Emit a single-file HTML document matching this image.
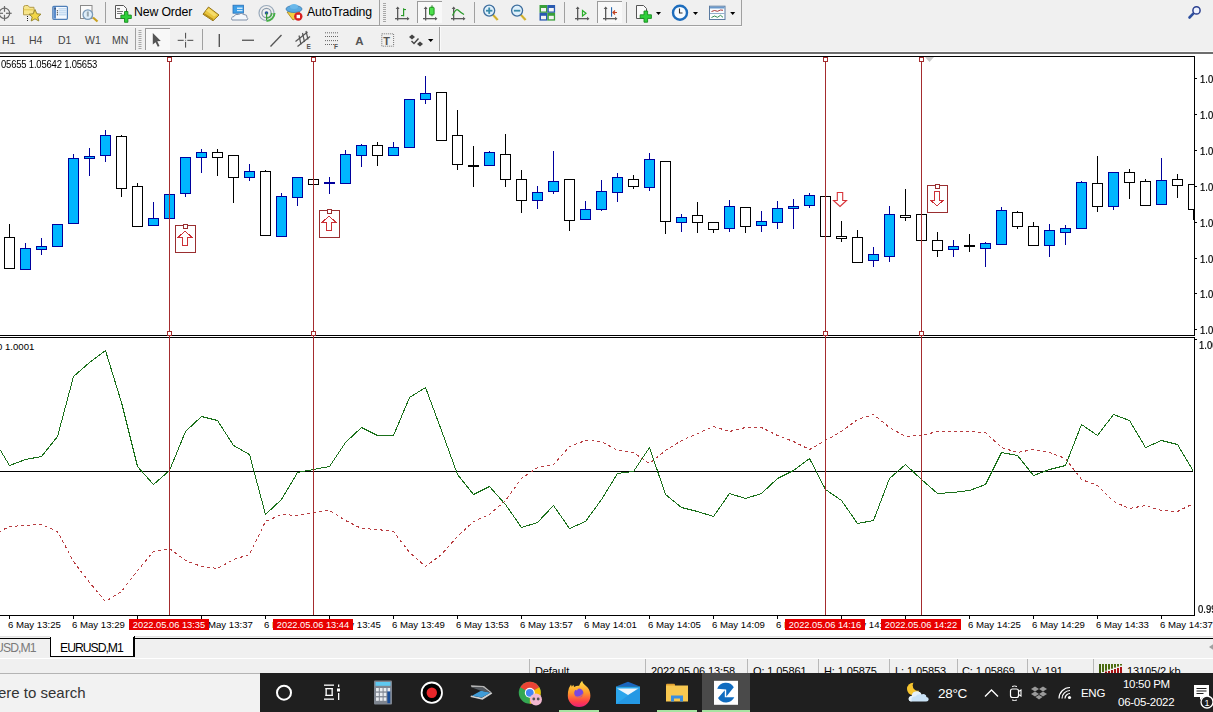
<!DOCTYPE html>
<html><head><meta charset="utf-8">
<style>
*{margin:0;padding:0;box-sizing:border-box}
html,body{width:1213px;height:712px;overflow:hidden;background:#f0f0f0;font-family:"Liberation Sans",sans-serif;position:relative}
.abs{position:absolute}
.tl{position:absolute;top:619px;font-size:9.6px;line-height:12px;color:#000;white-space:nowrap}
.rl{position:absolute;top:619px;width:80px;height:11px;background:#e80000;color:#fff;font-size:9.3px;line-height:12px;text-align:center;white-space:nowrap}
.pl{position:absolute;left:1200px;font-size:10.4px;line-height:12px;color:#000;white-space:nowrap;transform:scaleX(0.91);transform-origin:0 0;-webkit-text-stroke:0.2px #000}
.tb{position:absolute;font-size:12px;color:#000;white-space:nowrap}
.sep{position:absolute;top:659px;width:1px;height:14px;background:#b8b8b8}
.st{position:absolute;top:664px;font-size:11px;letter-spacing:-0.1px;line-height:14px;color:#000;white-space:nowrap}
.tk{position:absolute;color:#fff;line-height:15px;white-space:nowrap}
.tf{position:absolute;top:34px;font-size:10.5px;line-height:12px;color:#444;white-space:nowrap}
</style></head><body>
<!-- toolbar rows -->
<div class="abs" style="left:0;top:0;width:742px;height:26px;border-right:1px solid #a0a0a0;border-bottom:1px solid #a0a0a0"></div>
<div class="abs" style="left:0;top:26px;width:742px;height:1px;background:#fafafa"></div>
<div class="abs" style="left:0;top:51px;width:1213px;height:1px;background:#fafafa"></div>
<div class="abs" style="left:0;top:52px;width:1213px;height:2px;background:#6e6e6e"></div>
<svg class="abs" style="left:0;top:0" width="1213" height="54"><g stroke="#6a6a6a" fill="none" stroke-width="1.2"><circle cx="4.5" cy="13.3" r="5.2"/><line x1="4.5" y1="6" x2="4.5" y2="11.8"/><line x1="4.5" y1="14.8" x2="4.5" y2="20.8"/><line x1="-2" y1="13.3" x2="3" y2="13.3"/><line x1="6" y1="13.3" x2="11.7" y2="13.3"/></g><path d="M23.5 7.5 q0-2 2-2 h2.5 l1.5 1.8 h4.5 v7.5 h-10.5 z" fill="#f7e58a" stroke="#b39c4d" stroke-width="1"/><rect x="23.8" y="9" width="10" height="1.4" fill="#e8d060"/><g fill="#222"><rect x="27" y="16" width="1" height="1"/><rect x="27" y="18" width="1" height="1"/><rect x="27" y="20" width="1" height="1"/></g><polygon points="35,9.5 36.8,13.8 41,14.2 37.8,17 38.8,21 35,18.8 31.2,21 32.2,17 29,14.2 33.2,13.8" fill="#f2d646" stroke="#9a8a30" stroke-width="1"/><rect x="52.8" y="6.3" width="14.6" height="13" rx="1" fill="#f4f9ff" stroke="#4f7fb8" stroke-width="1.2"/><rect x="53.4" y="7" width="2.6" height="11.6" fill="#5a8ccc"/><g fill="#333"><rect x="54.5" y="8.2" width="1.2" height="1.2"/><rect x="56.8" y="10.2" width="1.1" height="1.1"/><rect x="56.8" y="12.2" width="1.1" height="1.1"/><rect x="56.8" y="14.2" width="1.1" height="1.1"/></g><g fill="#a8c8e8"><rect x="58.5" y="8.4" width="8" height="0.9"/><rect x="58.5" y="10.4" width="8" height="0.9"/><rect x="58.5" y="12.4" width="8" height="0.9"/><rect x="58.5" y="14.4" width="8" height="0.9"/></g><rect x="80.5" y="5.5" width="11.5" height="13" fill="#fbfbfb" stroke="#8a8a8a" stroke-width="1"/><line x1="93" y1="17.5" x2="97.5" y2="21.5" stroke="#c8a020" stroke-width="2.2"/><circle cx="87.8" cy="14.6" r="4.8" fill="#dfeefa" stroke="#7a9ab8" stroke-width="1.3"/><rect x="86.8" y="11.5" width="2" height="5" fill="#9aa8b0"/><rect x="105" y="2" width="1" height="21" fill="#a0a0a0"/><path d="M115.5 5.5 h8 l3 3 v10 h-11 z" fill="#fafafa" stroke="#555" stroke-width="1"/><g fill="#777"><rect x="117" y="8" width="3" height="1.5"/><rect x="117" y="11" width="6" height="1"/><rect x="117" y="13" width="5" height="1"/></g><path d="M124.5 11.5 h3.4 v3.6 h3.4 v3.4 h-3.4 v3.8 h-3.4 v-3.8 h-3.6 v-3.4 h3.6 z" fill="#2fcf3a" stroke="#178a1f" stroke-width="0.9"/><polygon points="208.5,7 219,15 213,20.8 203,14.2" fill="#e9c53c" stroke="#8b6b12" stroke-width="0.9"/><polygon points="203.5,14.5 213,20.5 213.5,19 204.5,13.2" fill="#b8901a"/><polygon points="209,8.5 217,14.8 214,16.5 206,10.5" fill="#f6dc6a"/><rect x="233" y="5.2" width="10.5" height="8" fill="#3d9ee6" stroke="#2a70b8" stroke-width="0.8"/><rect x="237" y="7.5" width="5.5" height="1.5" fill="#cfe8fb"/><rect x="237" y="10" width="5.5" height="1.2" fill="#cfe8fb"/><path d="M232 20 q-1.5-3 2-3.5 q1-3 4.5-2 q2.5-2.5 5.5 0 q3.5 0 3 3 q1.5 0.8 0 2.5 z" fill="#f4f7fb" stroke="#8090a8" stroke-width="1"/><g fill="none" stroke-width="1.2"><circle cx="266.5" cy="13" r="7.5" stroke="#9aaabb"/><circle cx="266.5" cy="13" r="4.6" stroke="#8a9aaa"/></g><path d="M266.5 21 a8 8 0 0 0 8 -8" fill="none" stroke="#48b048" stroke-width="2"/><path d="M267 18 a5 5 0 0 0 4.8 -5" fill="none" stroke="#48a848" stroke-width="1.6"/><circle cx="266.5" cy="13" r="1.8" fill="#2a5a9a"/><rect x="266" y="13" width="1.2" height="7" fill="#3a9a3a"/><path d="M287 12 l6 8 l7 -4 l-1 -6 z" fill="#f4d040" stroke="#a08020" stroke-width="0.8"/><ellipse cx="294" cy="9" rx="8" ry="3.5" fill="#5aaae0" stroke="#3a78b0" stroke-width="0.8"/><ellipse cx="294" cy="6.5" rx="4" ry="2.5" fill="#6ab8ea"/><circle cx="298.3" cy="16.5" r="4.2" fill="#d82020"/><rect x="296.6" y="14.8" width="3.4" height="3.4" fill="#fff"/><rect x="379" y="0" width="1" height="25" fill="#a0a0a0"/><rect x="383" y="3" width="3" height="1" fill="#a8a8a8"/><rect x="383" y="5" width="3" height="1" fill="#a8a8a8"/><rect x="383" y="7" width="3" height="1" fill="#a8a8a8"/><rect x="383" y="9" width="3" height="1" fill="#a8a8a8"/><rect x="383" y="11" width="3" height="1" fill="#a8a8a8"/><rect x="383" y="13" width="3" height="1" fill="#a8a8a8"/><rect x="383" y="15" width="3" height="1" fill="#a8a8a8"/><rect x="383" y="17" width="3" height="1" fill="#a8a8a8"/><rect x="383" y="19" width="3" height="1" fill="#a8a8a8"/><rect x="383" y="21" width="3" height="1" fill="#a8a8a8"/><g fill="#5a5a5a"><rect x="397" y="7.5" width="1.3" height="13"/><rect x="395" y="18" width="13.5" height="1.3"/><polygon points="397.65,6.5 395.7,9 399.6,9"/><polygon points="409.5,18.65 407,16.7 407,20.6"/></g><g fill="#2a9a2a"><rect x="403" y="8.3" width="1.2" height="8"/><rect x="404" y="9" width="2" height="1.1"/><rect x="401" y="15" width="2" height="1.1"/></g><rect x="417" y="1" width="25" height="22" fill="#f8f8f8"/><rect x="417" y="1" width="25" height="1" fill="#9a9a9a"/><rect x="417" y="1" width="1" height="22" fill="#9a9a9a"/><g fill="#5a5a5a"><rect x="425" y="7.5" width="1.3" height="13"/><rect x="423" y="18" width="13.5" height="1.3"/><polygon points="425.65,6.5 423.7,9 427.6,9"/><polygon points="437.5,18.65 435,16.7 435,20.6"/></g><rect x="431.5" y="5.3" width="1" height="11" fill="#1a7a1a"/><rect x="429.5" y="7.3" width="4.6" height="7.5" rx="0.8" fill="#4ce04c" stroke="#1a8a1a" stroke-width="0.9"/><g fill="#5a5a5a"><rect x="453" y="7.5" width="1.3" height="13"/><rect x="451" y="18" width="13.5" height="1.3"/><polygon points="453.65,6.5 451.7,9 455.6,9"/><polygon points="465.5,18.65 463,16.7 463,20.6"/></g><path d="M452.5 15.5 Q456 8 458 10 T464 14.5" fill="none" stroke="#2a9a2a" stroke-width="1.2"/><rect x="474" y="2" width="1" height="21" fill="#a0a0a0"/><line x1="492.7" y1="14.5" x2="497.7" y2="20" stroke="#e0c040" stroke-width="2.6"/><line x1="492.7" y1="14.5" x2="497.7" y2="20" stroke="#b09020" stroke-width="0.6"/><circle cx="489.2" cy="10.6" r="5.5" fill="#dff0fb" stroke="#3d6d9d" stroke-width="1.3"/><rect x="486.0" y="9.8" width="6.4" height="1.8" fill="#3a8aaa"/><rect x="488.3" y="7.5" width="1.8" height="6.4" fill="#3a8aaa"/><line x1="520.6" y1="14.5" x2="525.6" y2="20" stroke="#e0c040" stroke-width="2.6"/><line x1="520.6" y1="14.5" x2="525.6" y2="20" stroke="#b09020" stroke-width="0.6"/><circle cx="517.1" cy="10.6" r="5.5" fill="#dff0fb" stroke="#3d6d9d" stroke-width="1.3"/><rect x="513.9" y="9.8" width="6.4" height="1.8" fill="#3a8aaa"/><rect x="539.5" y="5" width="7.8" height="7.8" fill="#3aa03a"/><rect x="547.3" y="5" width="7.8" height="7.8" fill="#2a5ab0"/><rect x="539.5" y="12.8" width="7.8" height="7.8" fill="#2a5ab0"/><rect x="547.3" y="12.8" width="7.8" height="7.8" fill="#3aa03a"/><g fill="#f4f4f4"><rect x="541" y="8" width="5" height="3.5"/><rect x="548.8" y="8" width="5" height="3.5"/><rect x="541" y="15.8" width="5" height="3.5"/><rect x="548.8" y="15.8" width="5" height="3.5"/></g><rect x="564" y="2" width="1" height="21" fill="#a0a0a0"/><g fill="#5a5a5a"><rect x="577" y="7.5" width="1.3" height="13"/><rect x="575" y="18" width="13.5" height="1.3"/><polygon points="577.65,6.5 575.7,9 579.6,9"/><polygon points="589.5,18.65 587,16.7 587,20.6"/></g><polygon points="582.5,10.5 586,13.2 582.5,16" fill="none" stroke="#2ab02a" stroke-width="1.2"/><rect x="597" y="1" width="25" height="22" fill="#f8f8f8"/><rect x="597" y="1" width="25" height="1" fill="#9a9a9a"/><rect x="597" y="1" width="1" height="22" fill="#9a9a9a"/><g fill="#5a5a5a"><rect x="605" y="7.5" width="1.3" height="13"/><rect x="603" y="18" width="13.5" height="1.3"/><polygon points="605.65,6.5 603.7,9 607.6,9"/><polygon points="617.5,18.65 615,16.7 615,20.6"/></g><rect x="611" y="7.2" width="1.1" height="9.5" fill="#2a6ab0"/><path d="M617 12.5 h-4 M615 10.5 l-2 2 l2 2" fill="none" stroke="#c04020" stroke-width="1.2"/><rect x="626" y="2" width="1" height="21" fill="#a0a0a0"/><path d="M636.5 5.5 h7 l3 3 v10 h-10 z" fill="#fafafa" stroke="#555" stroke-width="1"/><path d="M644 11 h3.6 v3.8 h3.8 v3.6 h-3.8 v3.8 h-3.6 v-3.8 h-3.8 v-3.6 h3.8 z" fill="#2fcf3a" stroke="#178a1f" stroke-width="0.9"/><polygon points="656,12 661,12 658.5,15" fill="#000"/><circle cx="680" cy="12.7" r="7" fill="#f6fbff" stroke="#1d6dbd" stroke-width="2.4"/><path d="M679.5 8.5 v4.5 h3" fill="none" stroke="#333" stroke-width="1.1"/><polygon points="693,12 698,12 695.5,15" fill="#000"/><rect x="709.5" y="6.2" width="15.5" height="13.3" fill="#fbfdff" stroke="#5a7aa0" stroke-width="1"/><rect x="710" y="6.7" width="14.5" height="1.8" fill="#6a9acc"/><rect x="710" y="13" width="14.5" height="0.8" fill="#7a9ac0"/><path d="M711.5 11.5 l3 -1 l3 0.8 l3 -1.3 l2.5 0.3" fill="none" stroke="#a02020" stroke-width="0.9"/><path d="M711.5 17.5 l3 -1.5 l3 1.3 l3 -2 l2.5 2" fill="none" stroke="#208040" stroke-width="0.9"/><polygon points="730.2,12 735.2,12 732.7,15" fill="#000"/><line x1="1189.5" y1="17.5" x2="1193" y2="13.8" stroke="#2d4f9f" stroke-width="2.6" stroke-linecap="round"/><circle cx="1196.5" cy="10.4" r="3.6" fill="#eef3ff" stroke="#2a3f8f" stroke-width="1.5"/><rect x="135" y="28" width="1" height="22" fill="#a0a0a0"/><rect x="138.5" y="30" width="3" height="1" fill="#a8a8a8"/><rect x="138.5" y="32" width="3" height="1" fill="#a8a8a8"/><rect x="138.5" y="34" width="3" height="1" fill="#a8a8a8"/><rect x="138.5" y="36" width="3" height="1" fill="#a8a8a8"/><rect x="138.5" y="38" width="3" height="1" fill="#a8a8a8"/><rect x="138.5" y="40" width="3" height="1" fill="#a8a8a8"/><rect x="138.5" y="42" width="3" height="1" fill="#a8a8a8"/><rect x="138.5" y="44" width="3" height="1" fill="#a8a8a8"/><rect x="138.5" y="46" width="3" height="1" fill="#a8a8a8"/><rect x="138.5" y="48" width="3" height="1" fill="#a8a8a8"/><rect x="145" y="28" width="25" height="22" fill="#f8f8f8"/><rect x="145" y="28" width="25" height="1" fill="#9a9a9a"/><rect x="145" y="28" width="1" height="22" fill="#9a9a9a"/><polygon points="152.8,33 160.8,41 157.3,41.3 159.5,46 157.8,46.8 155.6,42.2 152.8,44.5" fill="#555"/><g fill="#555"><rect x="185" y="32.8" width="1.1" height="5.7"/><rect x="185" y="41.8" width="1.1" height="5.8"/><rect x="177.7" y="39.8" width="6" height="1.1"/><rect x="187.3" y="39.8" width="6" height="1.1"/><rect x="185" y="39.8" width="1.1" height="1.1" fill="#888"/></g><rect x="202" y="29" width="1" height="21" fill="#a0a0a0"/><rect x="218.6" y="34" width="1.4" height="13" fill="#555"/><rect x="242" y="39.6" width="12" height="1.3" fill="#555"/><line x1="270.5" y1="46.5" x2="281.5" y2="35" stroke="#555" stroke-width="1.3"/><g stroke="#555" stroke-width="1.2" fill="none"><line x1="295.5" y1="41.5" x2="307.5" y2="32"/><line x1="297.5" y1="46.5" x2="310" y2="36.5"/><line x1="299" y1="35.5" x2="301" y2="44.5"/><line x1="302.5" y1="33" x2="304.5" y2="42"/><line x1="306" y1="31" x2="308" y2="39.5"/></g><text x="306.5" y="49" font-family="Liberation Sans" font-weight="bold" font-size="6.5" fill="#555">E</text><g fill="#666"><rect x="325" y="32.3" width="1" height="1"/><rect x="327" y="32.3" width="1" height="1"/><rect x="329" y="32.3" width="1" height="1"/><rect x="331" y="32.3" width="1" height="1"/><rect x="333" y="32.3" width="1" height="1"/><rect x="335" y="32.3" width="1" height="1"/><rect x="337" y="32.3" width="1" height="1"/><rect x="325" y="36.0" width="1" height="1"/><rect x="327" y="36.0" width="1" height="1"/><rect x="329" y="36.0" width="1" height="1"/><rect x="331" y="36.0" width="1" height="1"/><rect x="333" y="36.0" width="1" height="1"/><rect x="335" y="36.0" width="1" height="1"/><rect x="337" y="36.0" width="1" height="1"/><rect x="325" y="40.1" width="1" height="1"/><rect x="327" y="40.1" width="1" height="1"/><rect x="329" y="40.1" width="1" height="1"/><rect x="331" y="40.1" width="1" height="1"/><rect x="333" y="40.1" width="1" height="1"/><rect x="335" y="40.1" width="1" height="1"/><rect x="337" y="40.1" width="1" height="1"/><rect x="325" y="44.0" width="1" height="1"/><rect x="327" y="44.0" width="1" height="1"/><rect x="329" y="44.0" width="1" height="1"/><rect x="331" y="44.0" width="1" height="1"/><rect x="333" y="44.0" width="1" height="1"/></g><text x="334" y="49" font-family="Liberation Sans" font-weight="bold" font-size="6.5" fill="#555">F</text><text x="355.3" y="44.6" font-family="Liberation Sans" font-weight="bold" font-size="11.5" fill="#555">A</text><rect x="381.8" y="33.8" width="11.8" height="12.4" fill="none" stroke="#777" stroke-width="1" stroke-dasharray="1 1"/><text x="383.3" y="44.5" font-family="Liberation Sans" font-weight="bold" font-size="11" fill="#555">T</text><polygon points="412,34.5 415,37 412,39.5 409,37" fill="#444"/><polygon points="420,41.5 423,44 420,46.5 417,44" fill="#444"/><path d="M411.5 41 l2.5 2.5 l4.5 -5" fill="none" stroke="#444" stroke-width="1.4"/><polygon points="428,39 433.4,39 430.7,42" fill="#000"/><rect x="439" y="27" width="1" height="24" fill="#a0a0a0"/><rect x="440" y="27" width="1" height="24" fill="#fafafa"/></svg>
<div class="tb" style="left:134px;top:5px;font-size:12.3px;line-height:14px;letter-spacing:-0.15px">New Order</div>
<div class="tb" style="left:307px;top:5px;font-size:12.3px;line-height:14px;letter-spacing:-0.15px">AutoTrading</div>
<div class="tf" style="left:2px">H1</div><div class="tf" style="left:29px">H4</div><div class="tf" style="left:58px">D1</div><div class="tf" style="left:85px">W1</div><div class="tf" style="left:112px">MN</div>
<svg class="abs" style="left:0;top:0" width="1213" height="712">
<defs><clipPath id="mainclip"><rect x="0" y="57" width="1194" height="278"/></clipPath>
<clipPath id="indclip"><rect x="0" y="338" width="1194" height="277"/></clipPath></defs>
<rect x="0" y="54" width="1213" height="583" fill="#ffffff"/><g shape-rendering="crispEdges" clip-path="url(#mainclip)"><rect x="9" y="224" width="1" height="13" fill="#000000"/><rect x="4" y="237" width="11" height="32" fill="#000000"/><rect x="5" y="238" width="9" height="30" fill="#ffffff"/><rect x="25" y="243" width="1" height="5" fill="#00009c"/><rect x="20" y="248" width="11" height="22" fill="#00009c"/><rect x="21" y="249" width="9" height="20" fill="#00b6ff"/><rect x="41" y="238" width="1" height="8" fill="#00009c"/><rect x="41" y="250" width="1" height="5" fill="#00009c"/><rect x="36" y="246" width="11" height="4" fill="#00009c"/><rect x="37" y="247" width="9" height="2" fill="#00b6ff"/><rect x="52" y="224" width="11" height="23" fill="#00009c"/><rect x="53" y="225" width="9" height="21" fill="#00b6ff"/><rect x="73" y="154" width="1" height="4" fill="#00009c"/><rect x="68" y="158" width="11" height="66" fill="#00009c"/><rect x="69" y="159" width="9" height="64" fill="#00b6ff"/><rect x="89" y="148" width="1" height="8" fill="#00009c"/><rect x="89" y="159" width="1" height="17" fill="#00009c"/><rect x="84" y="156" width="11" height="3" fill="#00009c"/><rect x="85" y="157" width="9" height="1" fill="#00b6ff"/><rect x="105" y="130" width="1" height="5" fill="#00009c"/><rect x="105" y="156" width="1" height="6" fill="#00009c"/><rect x="100" y="135" width="11" height="21" fill="#00009c"/><rect x="101" y="136" width="9" height="19" fill="#00b6ff"/><rect x="121" y="135" width="1" height="1" fill="#000000"/><rect x="121" y="189" width="1" height="8" fill="#000000"/><rect x="116" y="136" width="11" height="53" fill="#000000"/><rect x="117" y="137" width="9" height="51" fill="#ffffff"/><rect x="137" y="183" width="1" height="3" fill="#000000"/><rect x="137" y="227" width="1" height="0" fill="#000000"/><rect x="132" y="186" width="11" height="41" fill="#000000"/><rect x="133" y="187" width="9" height="39" fill="#ffffff"/><rect x="153" y="202" width="1" height="16" fill="#00009c"/><rect x="148" y="218" width="11" height="8" fill="#00009c"/><rect x="149" y="219" width="9" height="6" fill="#00b6ff"/><rect x="164" y="194" width="11" height="25" fill="#00009c"/><rect x="165" y="195" width="9" height="23" fill="#00b6ff"/><rect x="185" y="194" width="1" height="3" fill="#00009c"/><rect x="180" y="157" width="11" height="37" fill="#00009c"/><rect x="181" y="158" width="9" height="35" fill="#00b6ff"/><rect x="201" y="149" width="1" height="3" fill="#00009c"/><rect x="201" y="158" width="1" height="15" fill="#00009c"/><rect x="196" y="152" width="11" height="6" fill="#00009c"/><rect x="197" y="153" width="9" height="4" fill="#00b6ff"/><rect x="217" y="149" width="1" height="3" fill="#000000"/><rect x="217" y="158" width="1" height="18" fill="#000000"/><rect x="212" y="152" width="11" height="6" fill="#000000"/><rect x="213" y="153" width="9" height="4" fill="#ffffff"/><rect x="233" y="178" width="1" height="25" fill="#000000"/><rect x="228" y="155" width="11" height="23" fill="#000000"/><rect x="229" y="156" width="9" height="21" fill="#ffffff"/><rect x="249" y="164" width="1" height="7" fill="#00009c"/><rect x="249" y="178" width="1" height="3" fill="#00009c"/><rect x="244" y="171" width="11" height="7" fill="#00009c"/><rect x="245" y="172" width="9" height="5" fill="#00b6ff"/><rect x="265" y="170" width="1" height="1" fill="#000000"/><rect x="260" y="171" width="11" height="65" fill="#000000"/><rect x="261" y="172" width="9" height="63" fill="#ffffff"/><rect x="281" y="193" width="1" height="3" fill="#00009c"/><rect x="276" y="196" width="11" height="41" fill="#00009c"/><rect x="277" y="197" width="9" height="39" fill="#00b6ff"/><rect x="297" y="198" width="1" height="8" fill="#00009c"/><rect x="292" y="177" width="11" height="21" fill="#00009c"/><rect x="293" y="178" width="9" height="19" fill="#00b6ff"/><rect x="308" y="179" width="11" height="6" fill="#000000"/><rect x="309" y="180" width="9" height="4" fill="#ffffff"/><rect x="329" y="177" width="1" height="5" fill="#00009c"/><rect x="329" y="184" width="1" height="10" fill="#00009c"/><rect x="324" y="182" width="11" height="2" fill="#00009c"/><rect x="345" y="150" width="1" height="4" fill="#00009c"/><rect x="340" y="154" width="11" height="30" fill="#00009c"/><rect x="341" y="155" width="9" height="28" fill="#00b6ff"/><rect x="361" y="144" width="1" height="1" fill="#00009c"/><rect x="361" y="156" width="1" height="11" fill="#00009c"/><rect x="356" y="145" width="11" height="11" fill="#00009c"/><rect x="357" y="146" width="9" height="9" fill="#00b6ff"/><rect x="377" y="142" width="1" height="3" fill="#000000"/><rect x="377" y="156" width="1" height="10" fill="#000000"/><rect x="372" y="145" width="11" height="11" fill="#000000"/><rect x="373" y="146" width="9" height="9" fill="#ffffff"/><rect x="393" y="142" width="1" height="5" fill="#00009c"/><rect x="388" y="147" width="11" height="9" fill="#00009c"/><rect x="389" y="148" width="9" height="7" fill="#00b6ff"/><rect x="404" y="99" width="11" height="49" fill="#00009c"/><rect x="405" y="100" width="9" height="47" fill="#00b6ff"/><rect x="425" y="76" width="1" height="17" fill="#00009c"/><rect x="425" y="100" width="1" height="4" fill="#00009c"/><rect x="420" y="93" width="11" height="7" fill="#00009c"/><rect x="421" y="94" width="9" height="5" fill="#00b6ff"/><rect x="436" y="92" width="11" height="49" fill="#000000"/><rect x="437" y="93" width="9" height="47" fill="#ffffff"/><rect x="457" y="110" width="1" height="25" fill="#000000"/><rect x="457" y="165" width="1" height="5" fill="#000000"/><rect x="452" y="135" width="11" height="30" fill="#000000"/><rect x="453" y="136" width="9" height="28" fill="#ffffff"/><rect x="473" y="146" width="1" height="19" fill="#000000"/><rect x="473" y="167" width="1" height="20" fill="#000000"/><rect x="468" y="165" width="11" height="2" fill="#000000"/><rect x="489" y="151" width="1" height="1" fill="#00009c"/><rect x="484" y="152" width="11" height="14" fill="#00009c"/><rect x="485" y="153" width="9" height="12" fill="#00b6ff"/><rect x="505" y="134" width="1" height="20" fill="#000000"/><rect x="505" y="180" width="1" height="7" fill="#000000"/><rect x="500" y="154" width="11" height="26" fill="#000000"/><rect x="501" y="155" width="9" height="24" fill="#ffffff"/><rect x="521" y="170" width="1" height="9" fill="#000000"/><rect x="521" y="201" width="1" height="12" fill="#000000"/><rect x="516" y="179" width="11" height="22" fill="#000000"/><rect x="517" y="180" width="9" height="20" fill="#ffffff"/><rect x="537" y="186" width="1" height="6" fill="#00009c"/><rect x="537" y="201" width="1" height="8" fill="#00009c"/><rect x="532" y="192" width="11" height="9" fill="#00009c"/><rect x="533" y="193" width="9" height="7" fill="#00b6ff"/><rect x="553" y="151" width="1" height="30" fill="#00009c"/><rect x="553" y="192" width="1" height="2" fill="#00009c"/><rect x="548" y="181" width="11" height="11" fill="#00009c"/><rect x="549" y="182" width="9" height="9" fill="#00b6ff"/><rect x="569" y="221" width="1" height="10" fill="#000000"/><rect x="564" y="179" width="11" height="42" fill="#000000"/><rect x="565" y="180" width="9" height="40" fill="#ffffff"/><rect x="585" y="201" width="1" height="8" fill="#00009c"/><rect x="580" y="209" width="11" height="11" fill="#00009c"/><rect x="581" y="210" width="9" height="9" fill="#00b6ff"/><rect x="601" y="180" width="1" height="11" fill="#00009c"/><rect x="601" y="210" width="1" height="1" fill="#00009c"/><rect x="596" y="191" width="11" height="19" fill="#00009c"/><rect x="597" y="192" width="9" height="17" fill="#00b6ff"/><rect x="617" y="173" width="1" height="4" fill="#00009c"/><rect x="617" y="193" width="1" height="9" fill="#00009c"/><rect x="612" y="177" width="11" height="16" fill="#00009c"/><rect x="613" y="178" width="9" height="14" fill="#00b6ff"/><rect x="633" y="175" width="1" height="4" fill="#000000"/><rect x="633" y="187" width="1" height="2" fill="#000000"/><rect x="628" y="179" width="11" height="8" fill="#000000"/><rect x="629" y="180" width="9" height="6" fill="#ffffff"/><rect x="649" y="153" width="1" height="6" fill="#00009c"/><rect x="649" y="188" width="1" height="3" fill="#00009c"/><rect x="644" y="159" width="11" height="29" fill="#00009c"/><rect x="645" y="160" width="9" height="27" fill="#00b6ff"/><rect x="665" y="222" width="1" height="12" fill="#000000"/><rect x="660" y="161" width="11" height="61" fill="#000000"/><rect x="661" y="162" width="9" height="59" fill="#ffffff"/><rect x="681" y="214" width="1" height="3" fill="#00009c"/><rect x="681" y="223" width="1" height="9" fill="#00009c"/><rect x="676" y="217" width="11" height="6" fill="#00009c"/><rect x="677" y="218" width="9" height="4" fill="#00b6ff"/><rect x="697" y="202" width="1" height="13" fill="#000000"/><rect x="697" y="223" width="1" height="10" fill="#000000"/><rect x="692" y="215" width="11" height="8" fill="#000000"/><rect x="693" y="216" width="9" height="6" fill="#ffffff"/><rect x="713" y="230" width="1" height="3" fill="#000000"/><rect x="708" y="222" width="11" height="8" fill="#000000"/><rect x="709" y="223" width="9" height="6" fill="#ffffff"/><rect x="729" y="200" width="1" height="6" fill="#00009c"/><rect x="729" y="229" width="1" height="3" fill="#00009c"/><rect x="724" y="206" width="11" height="23" fill="#00009c"/><rect x="725" y="207" width="9" height="21" fill="#00b6ff"/><rect x="745" y="227" width="1" height="6" fill="#000000"/><rect x="740" y="207" width="11" height="20" fill="#000000"/><rect x="741" y="208" width="9" height="18" fill="#ffffff"/><rect x="761" y="211" width="1" height="10" fill="#00009c"/><rect x="761" y="226" width="1" height="6" fill="#00009c"/><rect x="756" y="221" width="11" height="5" fill="#00009c"/><rect x="757" y="222" width="9" height="3" fill="#00b6ff"/><rect x="777" y="201" width="1" height="7" fill="#00009c"/><rect x="777" y="223" width="1" height="6" fill="#00009c"/><rect x="772" y="208" width="11" height="15" fill="#00009c"/><rect x="773" y="209" width="9" height="13" fill="#00b6ff"/><rect x="793" y="199" width="1" height="7" fill="#00009c"/><rect x="793" y="209" width="1" height="20" fill="#00009c"/><rect x="788" y="206" width="11" height="3" fill="#00009c"/><rect x="789" y="207" width="9" height="1" fill="#00b6ff"/><rect x="809" y="193" width="1" height="2" fill="#00009c"/><rect x="809" y="206" width="1" height="2" fill="#00009c"/><rect x="804" y="195" width="11" height="11" fill="#00009c"/><rect x="805" y="196" width="9" height="9" fill="#00b6ff"/><rect x="820" y="196" width="11" height="41" fill="#000000"/><rect x="821" y="197" width="9" height="39" fill="#ffffff"/><rect x="841" y="221" width="1" height="15" fill="#000000"/><rect x="841" y="239" width="1" height="3" fill="#000000"/><rect x="836" y="236" width="11" height="3" fill="#000000"/><rect x="837" y="237" width="9" height="1" fill="#ffffff"/><rect x="857" y="230" width="1" height="7" fill="#000000"/><rect x="852" y="237" width="11" height="26" fill="#000000"/><rect x="853" y="238" width="9" height="24" fill="#ffffff"/><rect x="873" y="247" width="1" height="7" fill="#00009c"/><rect x="873" y="261" width="1" height="6" fill="#00009c"/><rect x="868" y="254" width="11" height="7" fill="#00009c"/><rect x="869" y="255" width="9" height="5" fill="#00b6ff"/><rect x="889" y="206" width="1" height="8" fill="#00009c"/><rect x="889" y="257" width="1" height="5" fill="#00009c"/><rect x="884" y="214" width="11" height="43" fill="#00009c"/><rect x="885" y="215" width="9" height="41" fill="#00b6ff"/><rect x="905" y="189" width="1" height="26" fill="#000000"/><rect x="905" y="218" width="1" height="3" fill="#000000"/><rect x="900" y="215" width="11" height="3" fill="#000000"/><rect x="901" y="216" width="9" height="1" fill="#ffffff"/><rect x="916" y="214" width="11" height="27" fill="#000000"/><rect x="917" y="215" width="9" height="25" fill="#ffffff"/><rect x="937" y="232" width="1" height="8" fill="#000000"/><rect x="937" y="251" width="1" height="6" fill="#000000"/><rect x="932" y="240" width="11" height="11" fill="#000000"/><rect x="933" y="241" width="9" height="9" fill="#ffffff"/><rect x="953" y="240" width="1" height="6" fill="#00009c"/><rect x="953" y="250" width="1" height="7" fill="#00009c"/><rect x="948" y="246" width="11" height="4" fill="#00009c"/><rect x="949" y="247" width="9" height="2" fill="#00b6ff"/><rect x="969" y="234" width="1" height="11" fill="#000000"/><rect x="969" y="247" width="1" height="5" fill="#000000"/><rect x="964" y="245" width="11" height="2" fill="#000000"/><rect x="985" y="242" width="1" height="1" fill="#00009c"/><rect x="985" y="249" width="1" height="18" fill="#00009c"/><rect x="980" y="243" width="11" height="6" fill="#00009c"/><rect x="981" y="244" width="9" height="4" fill="#00b6ff"/><rect x="1001" y="207" width="1" height="3" fill="#00009c"/><rect x="996" y="210" width="11" height="35" fill="#00009c"/><rect x="997" y="211" width="9" height="33" fill="#00b6ff"/><rect x="1017" y="211" width="1" height="1" fill="#000000"/><rect x="1017" y="227" width="1" height="2" fill="#000000"/><rect x="1012" y="212" width="11" height="15" fill="#000000"/><rect x="1013" y="213" width="9" height="13" fill="#ffffff"/><rect x="1033" y="222" width="1" height="4" fill="#000000"/><rect x="1033" y="246" width="1" height="0" fill="#000000"/><rect x="1028" y="226" width="11" height="20" fill="#000000"/><rect x="1029" y="227" width="9" height="18" fill="#ffffff"/><rect x="1049" y="224" width="1" height="6" fill="#00009c"/><rect x="1049" y="246" width="1" height="11" fill="#00009c"/><rect x="1044" y="230" width="11" height="16" fill="#00009c"/><rect x="1045" y="231" width="9" height="14" fill="#00b6ff"/><rect x="1065" y="225" width="1" height="3" fill="#00009c"/><rect x="1065" y="233" width="1" height="12" fill="#00009c"/><rect x="1060" y="228" width="11" height="5" fill="#00009c"/><rect x="1061" y="229" width="9" height="3" fill="#00b6ff"/><rect x="1081" y="181" width="1" height="1" fill="#00009c"/><rect x="1076" y="182" width="11" height="47" fill="#00009c"/><rect x="1077" y="183" width="9" height="45" fill="#00b6ff"/><rect x="1097" y="156" width="1" height="27" fill="#000000"/><rect x="1097" y="207" width="1" height="5" fill="#000000"/><rect x="1092" y="183" width="11" height="24" fill="#000000"/><rect x="1093" y="184" width="9" height="22" fill="#ffffff"/><rect x="1113" y="207" width="1" height="3" fill="#00009c"/><rect x="1108" y="172" width="11" height="35" fill="#00009c"/><rect x="1109" y="173" width="9" height="33" fill="#00b6ff"/><rect x="1129" y="169" width="1" height="3" fill="#000000"/><rect x="1129" y="183" width="1" height="16" fill="#000000"/><rect x="1124" y="172" width="11" height="11" fill="#000000"/><rect x="1125" y="173" width="9" height="9" fill="#ffffff"/><rect x="1145" y="179" width="1" height="2" fill="#000000"/><rect x="1140" y="181" width="11" height="25" fill="#000000"/><rect x="1141" y="182" width="9" height="23" fill="#ffffff"/><rect x="1161" y="158" width="1" height="22" fill="#00009c"/><rect x="1156" y="180" width="11" height="25" fill="#00009c"/><rect x="1157" y="181" width="9" height="23" fill="#00b6ff"/><rect x="1177" y="174" width="1" height="5" fill="#000000"/><rect x="1177" y="186" width="1" height="12" fill="#000000"/><rect x="1172" y="179" width="11" height="7" fill="#000000"/><rect x="1173" y="180" width="9" height="5" fill="#ffffff"/><rect x="1193" y="210" width="1" height="10" fill="#000000"/><rect x="1188" y="184" width="11" height="26" fill="#000000"/><rect x="1189" y="185" width="9" height="24" fill="#ffffff"/></g><g shape-rendering="crispEdges" fill="#000"><rect x="0" y="56" width="1195" height="1"/><rect x="1194" y="56" width="1" height="280"/><rect x="0" y="335" width="1195" height="1"/><rect x="0" y="337" width="1195" height="1"/><rect x="1194" y="337" width="1" height="279"/><rect x="0" y="615" width="1195" height="1"/><rect x="0" y="471" width="1193" height="1"/><rect x="1195" y="78" width="2" height="1"/><rect x="1195" y="114" width="2" height="1"/><rect x="1195" y="150" width="2" height="1"/><rect x="1195" y="186" width="2" height="1"/><rect x="1195" y="222" width="2" height="1"/><rect x="1195" y="258" width="2" height="1"/><rect x="1195" y="293" width="2" height="1"/><rect x="1195" y="329" width="2" height="1"/><rect x="1195" y="339" width="2" height="1"/><rect x="9" y="616" width="1" height="3"/><rect x="73" y="616" width="1" height="3"/><rect x="137" y="616" width="1" height="3"/><rect x="201" y="616" width="1" height="3"/><rect x="265" y="616" width="1" height="3"/><rect x="329" y="616" width="1" height="3"/><rect x="393" y="616" width="1" height="3"/><rect x="457" y="616" width="1" height="3"/><rect x="521" y="616" width="1" height="3"/><rect x="585" y="616" width="1" height="3"/><rect x="649" y="616" width="1" height="3"/><rect x="713" y="616" width="1" height="3"/><rect x="777" y="616" width="1" height="3"/><rect x="841" y="616" width="1" height="3"/><rect x="905" y="616" width="1" height="3"/><rect x="969" y="616" width="1" height="3"/><rect x="1033" y="616" width="1" height="3"/><rect x="1097" y="616" width="1" height="3"/><rect x="1161" y="616" width="1" height="3"/></g><g clip-path="url(#indclip)" shape-rendering="crispEdges"><polyline points="-7,535 9.5,526.5 25.5,525.5 41.5,524.5 57.5,531.5 73.5,561.5 89.5,582.5 105.5,601.5 121.5,591.5 137.5,570.5 153.5,551.5 169.5,548.5 185.5,560.5 201.5,566.5 217.5,568.5 233.5,559.5 249.5,554.5 265.5,521.5 281.5,514.5 297.5,515.5 313.5,512.5 329.5,510.5 345.5,520.5 361.5,528.5 377.5,529.5 393.5,531.5 409.5,552.5 425.5,566.5 441.5,554.5 457.5,536.5 473.5,521.5 489.5,514.5 505.5,500.5 521.5,478.5 537.5,467.5 553.5,464.5 569.5,446.5 585.5,440.5 601.5,441.5 617.5,450.5 633.5,452.5 649.5,463.5 665.5,450.5 681.5,440.5 697.5,433.5 713.5,426.5 729.5,431.5 745.5,427.5 761.5,427.5 777.5,435.5 793.5,441.5 809.5,449.5 825.5,440.5 841.5,431.5 857.5,419.5 873.5,414.5 889.5,427.5 905.5,436.5 921.5,435.5 937.5,431.5 953.5,431.5 969.5,431.5 985.5,432.5 1001.5,447.5 1017.5,452.5 1033.5,449.5 1049.5,452.5 1065.5,458.5 1081.5,479.5 1097.5,485.5 1113.5,501.5 1129.5,508.5 1145.5,505.5 1161.5,510.5 1177.5,511.5 1193.5,503.5" fill="none" stroke="#b83c40" stroke-width="1" stroke-dasharray="3 3"/><polyline points="-7,438 9.5,465.5 25.5,459.5 41.5,456.5 57.5,436.5 73.5,376.5 89.5,362.5 105.5,350.5 121.5,402.5 137.5,466.5 153.5,484.5 169.5,470.5 185.5,431.5 201.5,416.5 217.5,420.5 233.5,445.5 249.5,454.5 265.5,514.5 281.5,499.5 297.5,472.5 313.5,469.5 329.5,466.5 345.5,442.5 361.5,427.5 377.5,435.5 393.5,435.5 409.5,397.5 425.5,387.5 441.5,430.5 457.5,474.5 473.5,494.5 489.5,486.5 505.5,504.5 521.5,527.5 537.5,522.5 553.5,505.5 569.5,528.5 585.5,521.5 601.5,499.5 617.5,473.5 633.5,471.5 649.5,447.5 665.5,494.5 681.5,507.5 697.5,511.5 713.5,516.5 729.5,493.5 745.5,498.5 761.5,493.5 777.5,478.5 793.5,470.5 809.5,458.5 825.5,489.5 841.5,500.5 857.5,523.5 873.5,520.5 889.5,478.5 905.5,464.5 921.5,479.5 937.5,493.5 953.5,492.5 969.5,490.5 985.5,484.5 1001.5,452.5 1017.5,455.5 1033.5,475.5 1049.5,469.5 1065.5,465.5 1081.5,424.5 1097.5,435.5 1113.5,414.5 1129.5,420.5 1145.5,447.5 1161.5,440.5 1177.5,444.5 1193.5,471.5" fill="none" stroke="#1a701a" stroke-width="1"/></g><g shape-rendering="crispEdges"><rect x="169" y="57" width="1" height="558" fill="#a42c2e"/><rect x="167" y="57" width="5" height="5" fill="#a42c2e"/><rect x="168" y="58" width="3" height="3" fill="#fff"/><rect x="167" y="331" width="5" height="5" fill="#a42c2e"/><rect x="168" y="332" width="3" height="3" fill="#fff"/><rect x="313" y="57" width="1" height="558" fill="#a42c2e"/><rect x="311" y="57" width="5" height="5" fill="#a42c2e"/><rect x="312" y="58" width="3" height="3" fill="#fff"/><rect x="311" y="331" width="5" height="5" fill="#a42c2e"/><rect x="312" y="332" width="3" height="3" fill="#fff"/><rect x="825" y="57" width="1" height="558" fill="#a42c2e"/><rect x="823" y="57" width="5" height="5" fill="#a42c2e"/><rect x="824" y="58" width="3" height="3" fill="#fff"/><rect x="823" y="331" width="5" height="5" fill="#a42c2e"/><rect x="824" y="332" width="3" height="3" fill="#fff"/><rect x="921" y="57" width="1" height="558" fill="#a42c2e"/><rect x="919" y="57" width="5" height="5" fill="#a42c2e"/><rect x="920" y="58" width="3" height="3" fill="#fff"/><rect x="919" y="331" width="5" height="5" fill="#a42c2e"/><rect x="920" y="332" width="3" height="3" fill="#fff"/></g><polygon points="925,57 934,57 929.5,62" fill="#c8c8c8"/><rect x="175.5" y="225.5" width="20" height="27" fill="none" stroke="#9a2e30" stroke-width="1"/><rect x="183.5" y="224.5" width="4" height="4" fill="#fff" stroke="#9a2e30" stroke-width="1"/><polygon points="185,231 191.5,237 187.7,237 187.7,245.5 182.3,245.5 182.3,237 178.5,237" fill="none" stroke="#cc3036" stroke-width="1" shape-rendering="crispEdges"/><rect x="319.5" y="210.5" width="20" height="27" fill="none" stroke="#9a2e30" stroke-width="1"/><rect x="327.5" y="209.5" width="4" height="4" fill="#fff" stroke="#9a2e30" stroke-width="1"/><polygon points="329,216 335.5,222 331.7,222 331.7,230.5 326.3,230.5 326.3,222 322.5,222" fill="none" stroke="#cc3036" stroke-width="1" shape-rendering="crispEdges"/><rect x="927.5" y="185.5" width="20" height="27" fill="none" stroke="#9a2e30" stroke-width="1"/><rect x="935.5" y="184.5" width="4" height="4" fill="#fff" stroke="#9a2e30" stroke-width="1"/><polygon points="937,206 943.5,200 939.7,200 939.7,191.5 934.3,191.5 934.3,200 930.5,200" fill="none" stroke="#cc3036" stroke-width="1" shape-rendering="crispEdges"/><polygon points="840,206.5 846.5,200.5 842.7,200.5 842.7,192.5 837.3,192.5 837.3,200.5 833.5,200.5" fill="none" stroke="#d8343a" stroke-width="1.1"/>
</svg>
<div class="abs" style="left:1px;top:59px;font-size:10.4px;line-height:12px;letter-spacing:-0.2px;transform:scaleX(0.91);transform-origin:0 0;color:#000;white-space:nowrap">05655 1.05642 1.05653</div>
<div class="abs" style="left:-3px;top:341px;font-size:9.6px;line-height:11px;color:#000;white-space:nowrap">0 1.0001</div>
<div class="pl" style="top:73.5px">1.05900</div><div class="pl" style="top:109.5px">1.05880</div><div class="pl" style="top:145.5px">1.05860</div><div class="pl" style="top:181.5px">1.05840</div><div class="pl" style="top:217.5px">1.05820</div><div class="pl" style="top:253.5px">1.05800</div><div class="pl" style="top:288.5px">1.05780</div><div class="pl" style="top:324.5px">1.05760</div><div class="pl" style="top:340px;left:1198.5px">1.0001</div><div class="pl" style="top:604px;left:1198px">0.9999</div>
<div class="tl" style="left:8px">6 May 13:25</div><div class="tl" style="left:72px">6 May 13:29</div><div class="tl" style="left:136px">6 May 13:33</div><div class="tl" style="left:200px">6 May 13:37</div><div class="tl" style="left:264px">6 May 13:41</div><div class="tl" style="left:328px">6 May 13:45</div><div class="tl" style="left:392px">6 May 13:49</div><div class="tl" style="left:456px">6 May 13:53</div><div class="tl" style="left:520px">6 May 13:57</div><div class="tl" style="left:584px">6 May 14:01</div><div class="tl" style="left:648px">6 May 14:05</div><div class="tl" style="left:712px">6 May 14:09</div><div class="tl" style="left:776px">6 May 14:13</div><div class="tl" style="left:840px">6 May 14:17</div><div class="tl" style="left:904px">6 May 14:21</div><div class="tl" style="left:968px">6 May 14:25</div><div class="tl" style="left:1032px">6 May 14:29</div><div class="tl" style="left:1096px">6 May 14:33</div><div class="tl" style="left:1160px">6 May 14:37</div>
<div class="rl" style="left:129px">2022.05.06 13:35</div><div class="rl" style="left:273px">2022.05.06 13:44</div><div class="rl" style="left:785px">2022.05.06 14:16</div><div class="rl" style="left:881px">2022.05.06 14:22</div>
<!-- tabs -->
<div class="abs" style="left:0;top:636px;width:1213px;height:1px;background:#e2e2e2"></div>
<div class="abs" style="left:0;top:638px;width:51px;height:1px;background:#000"></div>
<div class="abs" style="left:134px;top:638px;width:1079px;height:1px;background:#000"></div>
<div class="abs" style="left:50px;top:636px;width:85px;height:21px;background:#fff;border-left:1px solid #000;border-right:2px solid #000;border-bottom:1px solid #000"></div>
<div class="abs" style="left:50px;top:636px;width:84px;height:1px;background:#fff"></div>
<div class="abs" style="left:-5px;top:641px;font-size:12.2px;line-height:14px;letter-spacing:-0.9px;color:#7a7a7a">USD,M1</div>
<div class="abs" style="left:60px;top:641px;font-size:12.2px;line-height:14px;letter-spacing:-1px;color:#000">EURUSD,M1</div>
<svg class="abs" style="left:1205px;top:640px" width="10" height="14"><polygon points="10,3 4,7 10,11" fill="#a0a0a0"/></svg>
<!-- status bar -->
<div class="abs" style="left:0;top:658px;width:1213px;height:1px;background:#fff"></div>
<div class="sep" style="left:529px"></div><div class="st" style="left:535px">Default</div>
<div class="sep" style="left:645px"></div><div class="st" style="left:651px">2022.05.06 13:58</div>
<div class="sep" style="left:747px"></div><div class="st" style="left:753px">O: 1.05861</div>
<div class="sep" style="left:818px"></div><div class="st" style="left:824px">H: 1.05875</div>
<div class="sep" style="left:889px"></div><div class="st" style="left:895px">L: 1.05853</div>
<div class="sep" style="left:957px"></div><div class="st" style="left:962px">C: 1.05869</div>
<div class="sep" style="left:1027px"></div><div class="st" style="left:1032px">V: 191</div>
<div class="sep" style="left:1093px"></div><div class="st" style="left:1127px">13105/2 kb</div>
<svg class="abs" style="left:1095px;top:660px" width="30" height="14"><rect x="4" y="4" width="2" height="9" fill="#42600e"/><rect x="7" y="4" width="2" height="8" fill="#4e6e12"/><rect x="10" y="4" width="2" height="6.7000000000000455" fill="#4e6e12"/><rect x="10" y="11.5" width="2" height="1.5" fill="#961010"/><rect x="13" y="4" width="2" height="5.5" fill="#4e6e12"/><rect x="13" y="11" width="2" height="2" fill="#a81212"/><rect x="16" y="4" width="2" height="4.7000000000000455" fill="#4e6e12"/><rect x="16" y="10" width="2" height="3" fill="#a81212"/><rect x="19" y="4" width="2" height="3.6000000000000227" fill="#4e6e12"/><rect x="19" y="9" width="2" height="4" fill="#a81212"/><rect x="22" y="4" width="2" height="2.6000000000000227" fill="#4e6e12"/><rect x="22" y="8" width="2" height="5" fill="#a81212"/><rect x="25" y="4" width="2" height="1.5" fill="#4e6e12"/><rect x="25" y="7" width="2" height="6" fill="#a81212"/></svg>
<div class="abs" style="left:0;top:673px;width:260px;height:39px;background:#f2f2f2;border-top:1px solid #b4b4b4"></div>
<div class="abs" style="left:-2px;top:684px;font-size:15px;line-height:18px;color:#333">ere to search</div>
<svg class="abs" style="left:0;top:0" width="1213" height="712">
<rect x="260" y="673" width="953" height="39" fill="#1f1f1f"/><rect x="702" y="673" width="48" height="39" fill="#4a4a4a"/><rect x="559" y="710" width="40" height="2" fill="#a6e3a1"/><rect x="657" y="710" width="40" height="2" fill="#a6e3a1"/><rect x="702" y="710" width="48" height="2" fill="#a6e3a1"/><circle cx="284" cy="692.7" r="7" fill="none" stroke="#fff" stroke-width="2"/><g fill="#fff"><rect x="324" y="684.5" width="10" height="1.3"/><rect x="324" y="698.5" width="10" height="1.3"/><rect x="325.5" y="688" width="1.3" height="8"/><rect x="331.5" y="688" width="1.3" height="8"/><rect x="325.5" y="688" width="7.3" height="1.3"/><rect x="325.5" y="694.7" width="7.3" height="1.3"/><rect x="338" y="684.5" width="1.3" height="2.5"/><rect x="337" y="688.5" width="3" height="3"/><rect x="338" y="693" width="1.3" height="7"/></g><rect x="374" y="680.5" width="18" height="24" rx="1" fill="#7e8590"/><rect x="375.5" y="682" width="15" height="3.8" fill="#5ec8f0"/><g fill="#e8ecf0"><rect x="376.0" y="688.0" width="2.8" height="3.4"/><rect x="379.8" y="688.0" width="2.8" height="3.4"/><rect x="383.6" y="688.0" width="2.8" height="3.4"/><rect x="376.0" y="692.7" width="2.8" height="3.4"/><rect x="379.8" y="692.7" width="2.8" height="3.4"/><rect x="383.6" y="692.7" width="2.8" height="3.4"/><rect x="376.0" y="697.4" width="2.8" height="3.4"/><rect x="379.8" y="697.4" width="2.8" height="3.4"/><rect x="383.6" y="697.4" width="2.8" height="3.4"/></g><rect x="387.4" y="688" width="2.8" height="15.2" fill="#1a4f9a"/><rect x="387.4" y="688" width="2.8" height="3.4" fill="#e8ecf0"/><circle cx="431.8" cy="692.7" r="10.2" fill="#000" stroke="#fff" stroke-width="1.8"/><circle cx="431.8" cy="692.7" r="5.2" fill="#e8262a"/><path d="M470.5 697 L482.5 699.8 L492.3 693.5 L491 692.3 L481.8 697.8 L471 695.6 Z" fill="#d0d0d0"/><path d="M472 695.8 L481.8 697.6 L490.8 692.6 L481 690.8 Z" fill="#3f9bd6"/><path d="M470.8 685.3 L484 686 L491.8 692.5 L490.3 692.8 L483 687.6 L471.5 687.2 Z" fill="#b4b4b4"/><path d="M471.5 687.2 L483 687.6 L490.3 692.8 L480 690.5 Z" fill="#555a60"/><circle cx="529.8" cy="692.8" r="11" fill="#34a853"/><path d="M529.8 692.8 L520.3 687.3 A11 11 0 0 1 539.3 687.3 Z" fill="#ea4335"/><path d="M529.8 692.8 L539.3 687.3 A11 11 0 0 1 529.8 703.8 Z" fill="#fbbc04"/><circle cx="529.8" cy="692.8" r="5" fill="#fff"/><circle cx="529.8" cy="692.8" r="3.9" fill="#4285f4"/><circle cx="536" cy="699.5" r="6" fill="#f2b8d0"/><circle cx="533.8" cy="699" r="1.4" fill="#555"/><circle cx="538.2" cy="699" r="1.4" fill="#555"/><defs><linearGradient id="ffg" x1="0" y1="0" x2="0" y2="1"><stop offset="0" stop-color="#ffe24a"/><stop offset="0.45" stop-color="#ff9a2a"/><stop offset="0.8" stop-color="#ff3d4a"/><stop offset="1" stop-color="#e8207a"/></linearGradient></defs><path d="M568 692 q0.5 -4.5 3 -7.5 l0.8 2.3 l1.5 -2 l0.8 2.2 q2.5 -1.5 5 -1.2 q1 -3 3 -5 q0.5 2.5 2.5 4 q2 1.5 2.8 2.5 q3 3.5 3 8.5 a11.3 11.3 0 0 1 -22.6 0 z" fill="url(#ffg)"/><circle cx="578.8" cy="693" r="4.6" fill="#7a48e0"/><path d="M574 690 q2 -3 6 -2.5 q-2.5 1 -3 3 q-1.5 -1 -3 -0.5 z" fill="#ffb030"/><path d="M583.5 692 a5 5 0 0 1 -9 3.5 a6 6 0 0 0 9 -3.5 z" fill="#ff7a3a" opacity="0.7"/><polygon points="616,686.5 628,681.8 640,686.5" fill="#1a66c0"/><rect x="616" y="686.5" width="24" height="17.5" fill="#2ba6ec"/><polygon points="617,688.5 639,688.5 628,695" fill="#eef6fc"/><polygon points="616,704 640,687 640,704" fill="#1f90e0" opacity="0.6"/><rect x="666" y="683.8" width="9" height="3" rx="1" fill="#e0a030"/><rect x="666" y="685.5" width="22" height="16" fill="#f8c850"/><path d="M671 701.6 v-6 h12 v6 h-3 v-3 h-6 v3 z" fill="#3a8ee0"/><rect x="714" y="680.8" width="24" height="24" fill="#fff"/><path d="M717.2 688.7 A9.3 9.3 0 0 1 733.8 687.3 L726.2 696.8 L726.2 689.6 Z" fill="#106cc0"/><path d="M724.8 690.2 L718 698 A9.3 9.3 0 0 0 734.3 697.2 L724.8 697.2 Z" fill="#106cc0"/><defs><mask id="moonm"><rect x="900" y="676" width="40" height="30" fill="#fff"/><circle cx="918" cy="685.5" r="5.3" fill="#000"/></mask></defs><circle cx="913.2" cy="689" r="6.2" fill="#f6c42e" mask="url(#moonm)"/><path d="M911.5 701.5 q-3 0 -2.8 -3 q0.3 -2.6 3 -2.6 q0.8 -4.5 5.5 -4.3 q3.3 0.2 4.3 3 q1.2 -1 3 -0.3 q2 0.8 1.9 2.8 q2.5 0.5 2.3 2.4 q-0.2 2 -2.5 2 z" fill="#c9e2f6"/><path d="M911.5 701.5 q-3 0 -2.8 -3 q0.3 -2.6 3 -2.6 q0.8 -4.5 5.5 -4.3 q3.3 0.2 4.3 3 q-4 -1 -6 2 q-3 -0.5 -4 1.8 z" fill="#e6f2fb"/><g fill="#9a9a9a"><polygon points="1035,686.5 1039,689 1035,691.5 1031,689"/><polygon points="1043,686.5 1047,689 1043,691.5 1039,689"/><polygon points="1035,691.5 1039,694 1035,696.5 1031,694"/><polygon points="1043,691.5 1047,694 1043,696.5 1039,694"/><polygon points="1039,695 1042.5,697 1039,699.5 1035.5,697"/></g><path d="M985 696.5 l6.5 -6.5 l6.5 6.5" fill="none" stroke="#fff" stroke-width="1.3"/><rect x="1010.5" y="689" width="8" height="8.5" rx="2" fill="none" stroke="#fff" stroke-width="1.2"/><path d="M1018.5 691.5 l2.5 -1.5 v6 l-2.5 -1.5" fill="none" stroke="#fff" stroke-width="1.1"/><path d="M1012 686.5 q2.5 -1 5 0 M1012 700 q2.5 1 5 0" fill="none" stroke="#fff" stroke-width="1"/><g fill="none" stroke="#fff" stroke-width="1.2"><path d="M1059 698.5 a11 11 0 0 1 11 -11"/><path d="M1062 698.5 a8 8 0 0 1 8 -8"/><path d="M1065 698.5 a5 5 0 0 1 5 -5"/></g><circle cx="1069.5" cy="697.5" r="1.6" fill="#fff"/><path d="M1194 685 h15 v12 h-6 l-3 3 v-3 h-6 z" fill="#fff"/><g fill="#1f1f1f"><rect x="1196.5" y="688" width="10" height="1"/><rect x="1196.5" y="690.5" width="10" height="1"/><rect x="1196.5" y="693" width="7" height="1"/></g><circle cx="1207" cy="702" r="6" fill="#1f1f1f" stroke="#fff" stroke-width="1.3"/><text x="1204.6" y="706" font-family="Liberation Sans" font-size="9" fill="#fff">1</text>
</svg>
<div class="tk" style="left:938px;top:686px;font-size:13.5px;letter-spacing:-0.3px">28°C</div>
<div class="tk" style="left:1081px;top:686px;font-size:11.5px;letter-spacing:-0.3px">ENG</div>
<div class="tk" style="left:1123px;top:677px;font-size:11.5px;letter-spacing:-0.3px">10:50 PM</div>
<div class="tk" style="left:1118px;top:695px;font-size:11.5px;letter-spacing:-0.25px">06-05-2022</div>
</body></html>
